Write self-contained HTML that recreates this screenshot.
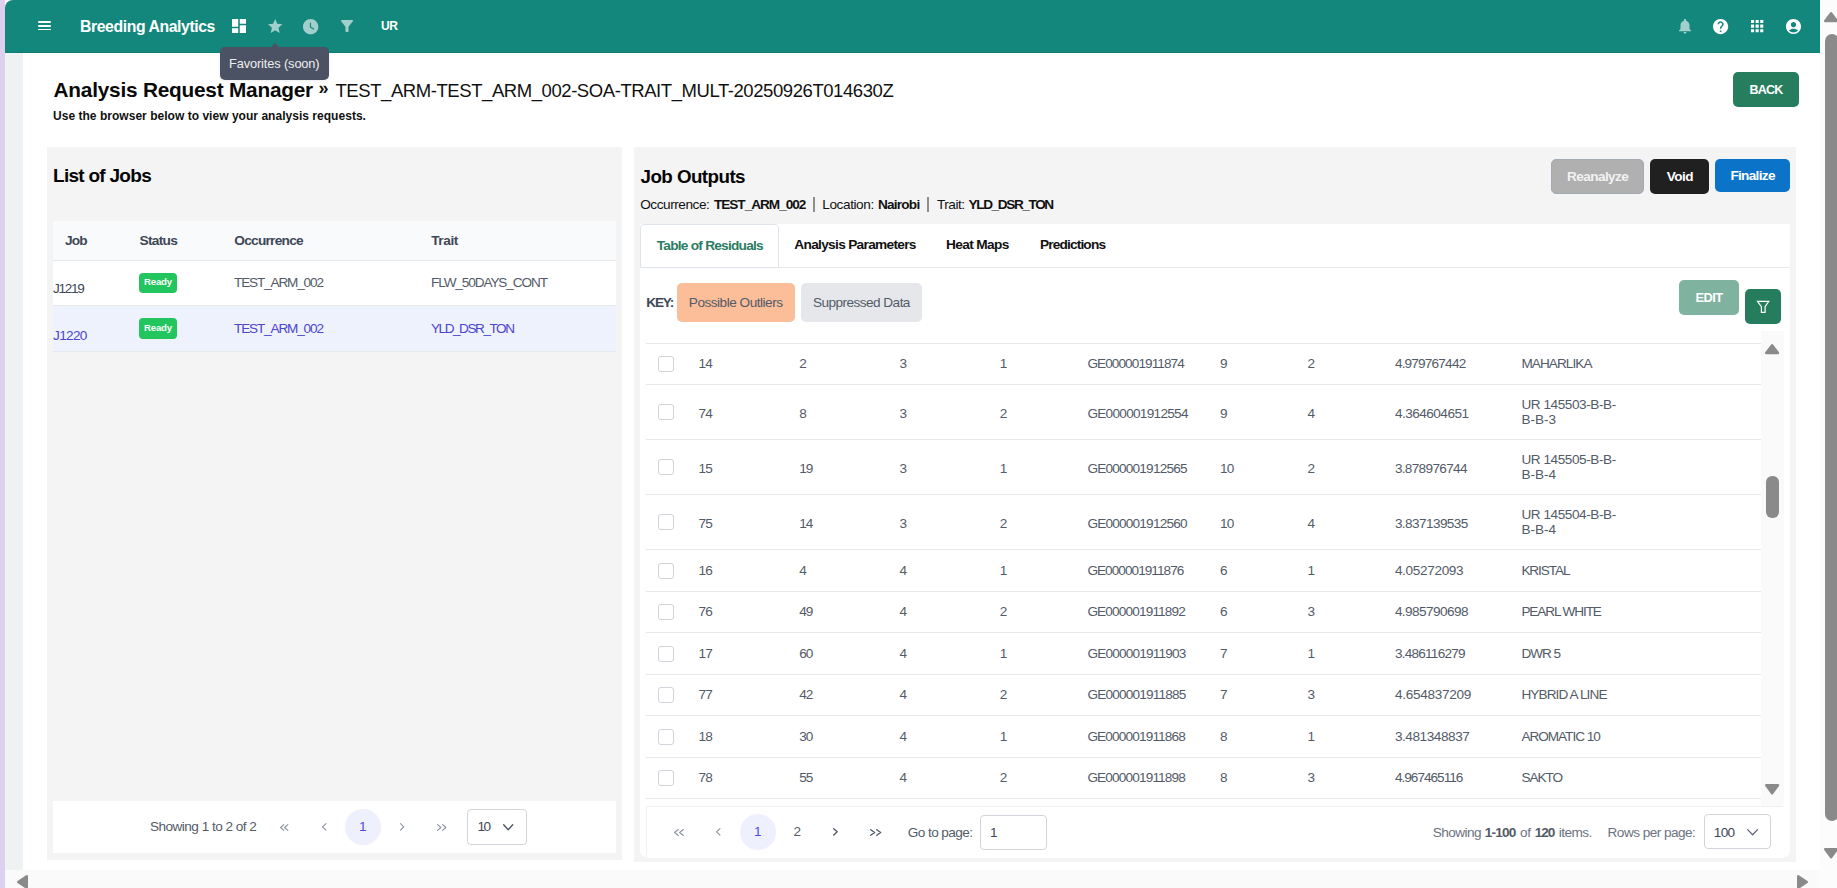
<!DOCTYPE html><html><head><meta charset="utf-8"><style>html,body{margin:0;padding:0;width:1837px;height:888px;overflow:hidden;background:#fff;}body{position:relative;font-family:"Liberation Sans", sans-serif;}.t{position:absolute;white-space:nowrap;line-height:1.117;}</style></head><body><div style="position:absolute;left:0px;top:0px;width:1837px;height:888px;background:#ffffff;"></div><div style="position:absolute;left:0px;top:0px;width:5px;height:888px;background:#ded0ef;"></div><div style="position:absolute;left:5px;top:53px;width:18px;height:817px;background:#eef2f3;"></div><div style="position:absolute;left:5px;top:0px;width:1815px;height:53px;background:#14877c;border-top-left-radius:8px;"></div><div style="position:absolute;left:5px;top:52px;width:1815px;height:1px;background:#0f7f74;"></div><div style="position:absolute;left:1820px;top:0px;width:17px;height:870px;background:#fcfcfc;"></div><div style="position:absolute;left:0px;top:870px;width:20px;height:18px;background:#ded0ef;"></div><div style="position:absolute;left:5px;top:870px;width:1815px;height:26px;background:#fafafa;border-bottom-left-radius:10px;"></div><div style="position:absolute;left:1820px;top:870px;width:17px;height:18px;background:#fcfcfc;"></div><div style="position:absolute;left:37.5px;top:21.4px;width:13.200000000000003px;height:1.6499999999999986px;background:#ffffff;border-radius:1px;"></div><div style="position:absolute;left:37.5px;top:24.95px;width:13.200000000000003px;height:1.6499999999999986px;background:#ffffff;border-radius:1px;"></div><div style="position:absolute;left:37.5px;top:28.5px;width:13.200000000000003px;height:1.6499999999999986px;background:#ffffff;border-radius:1px;"></div><div style="position:absolute;left:220px;top:47px;width:109px;height:33px;background:#4b5263;border-radius:5px;box-shadow:0 1px 3px rgba(0,0,0,0.08);"></div><div style="position:absolute;left:270px;top:43px;width:0;height:0;border-left:5px solid transparent;border-right:5px solid transparent;border-bottom:5px solid #4b5263;"></div><div style="position:absolute;left:1733px;top:72px;width:66px;height:35px;background:#277e5f;border-radius:5px;"></div><div style="position:absolute;left:47px;top:147px;width:575px;height:713px;background:#f4f4f4;"></div><div style="position:absolute;left:53px;top:221px;width:563px;height:39px;background:#f9fafb;"></div><div style="position:absolute;left:53px;top:260px;width:563px;height:1px;background:#e5e7eb;"></div><div style="position:absolute;left:53px;top:261px;width:563px;height:44px;background:#ffffff;"></div><div style="position:absolute;left:53px;top:305px;width:563px;height:1px;background:#e5e7eb;"></div><div style="position:absolute;left:53px;top:306px;width:563px;height:45px;background:#eef2fd;"></div><div style="position:absolute;left:53px;top:351px;width:563px;height:1px;background:#e5e7eb;"></div><div style="position:absolute;left:139px;top:273px;width:38px;height:20px;background:#22c55e;border-radius:4px;"></div><div style="position:absolute;left:139px;top:318px;width:38px;height:21px;background:#22c55e;border-radius:4px;"></div><div style="position:absolute;left:53px;top:801px;width:563px;height:52px;background:#ffffff;"></div><div style="position:absolute;left:344.7px;top:808.7px;width:36.60000000000002px;height:36.0px;background:#eef0fd;border-radius:50%;"></div><div style="position:absolute;left:467px;top:809px;width:60px;height:36px;background:#ffffff;border:1px solid #d1d5db;border-radius:4px;box-sizing:border-box;"></div><div style="position:absolute;left:634px;top:147px;width:1162px;height:715px;background:#f4f4f4;"></div><div style="position:absolute;left:1551px;top:159px;width:93px;height:35px;background:#b0b0b0;border:1px solid #a3aab5;border-radius:5px;box-sizing:border-box;"></div><div style="position:absolute;left:1650px;top:159px;width:59px;height:35px;background:#202020;border-radius:5px;"></div><div style="position:absolute;left:1715px;top:159px;width:75px;height:33px;background:#0b74c9;border-radius:5px;"></div><div style="position:absolute;left:813.4px;top:197.3px;width:1.6000000000000227px;height:14.299999999999983px;background:#8e8e8e;"></div><div style="position:absolute;left:927.2px;top:197.3px;width:1.599999999999909px;height:14.299999999999983px;background:#8e8e8e;"></div><div style="position:absolute;left:640px;top:224px;width:1150px;height:633px;background:#ffffff;border-radius:0 0 6px 6px;"></div><div style="position:absolute;left:640px;top:267px;width:1150px;height:1px;background:#e3e7ec;"></div><div style="position:absolute;left:640px;top:224px;width:139px;height:44px;background:#fff;border:1px solid #dfe4ea;border-radius:4px 4px 0 0;box-sizing:border-box;"></div><div style="position:absolute;left:677px;top:283px;width:118px;height:38.5px;background:#fbbe98;border-radius:5px;"></div><div style="position:absolute;left:801px;top:283px;width:120.60000000000002px;height:38.5px;background:#e5e7eb;border-radius:5px;"></div><div style="position:absolute;left:1679px;top:280px;width:60px;height:35px;background:#7fb39f;border-radius:5px;"></div><div style="position:absolute;left:1745px;top:289px;width:36px;height:35px;background:#267d5e;border-radius:5px;"></div><svg style="position:absolute;left:1756px;top:300px" width="14" height="14" viewBox="0 0 14 14"><path d="M1.5 1.4 H12.7 L9.1 6.6 V12.3 H5.4 V6.6 Z" fill="none" stroke="#fff" stroke-width="1.2" stroke-linejoin="miter"/></svg><div style="position:absolute;left:1761px;top:331px;width:23px;height:475px;background:#fafafa;"></div><div style="position:absolute;left:646px;top:343px;width:1115px;height:1px;background:#e5e7eb;"></div><div style="position:absolute;left:646px;top:384px;width:1115px;height:1px;background:#e5e7eb;"></div><div style="position:absolute;left:658px;top:356.0px;width:16px;height:16.0px;background:#ffffff;border:1px solid #cfd3da;border-radius:3px;box-sizing:border-box;"></div><div style="position:absolute;left:646px;top:439px;width:1115px;height:1px;background:#e5e7eb;"></div><div style="position:absolute;left:658px;top:404.0px;width:16px;height:16.0px;background:#ffffff;border:1px solid #cfd3da;border-radius:3px;box-sizing:border-box;"></div><div style="position:absolute;left:646px;top:494px;width:1115px;height:1px;background:#e5e7eb;"></div><div style="position:absolute;left:658px;top:459.0px;width:16px;height:16.0px;background:#ffffff;border:1px solid #cfd3da;border-radius:3px;box-sizing:border-box;"></div><div style="position:absolute;left:646px;top:549px;width:1115px;height:1px;background:#e5e7eb;"></div><div style="position:absolute;left:658px;top:514.0px;width:16px;height:16.0px;background:#ffffff;border:1px solid #cfd3da;border-radius:3px;box-sizing:border-box;"></div><div style="position:absolute;left:646px;top:591px;width:1115px;height:1px;background:#e5e7eb;"></div><div style="position:absolute;left:658px;top:562.5px;width:16px;height:16.0px;background:#ffffff;border:1px solid #cfd3da;border-radius:3px;box-sizing:border-box;"></div><div style="position:absolute;left:646px;top:632px;width:1115px;height:1px;background:#e5e7eb;"></div><div style="position:absolute;left:658px;top:604.0px;width:16px;height:16.0px;background:#ffffff;border:1px solid #cfd3da;border-radius:3px;box-sizing:border-box;"></div><div style="position:absolute;left:646px;top:674px;width:1115px;height:1px;background:#e5e7eb;"></div><div style="position:absolute;left:658px;top:645.5px;width:16px;height:16.0px;background:#ffffff;border:1px solid #cfd3da;border-radius:3px;box-sizing:border-box;"></div><div style="position:absolute;left:646px;top:715px;width:1115px;height:1px;background:#e5e7eb;"></div><div style="position:absolute;left:658px;top:687.0px;width:16px;height:16.0px;background:#ffffff;border:1px solid #cfd3da;border-radius:3px;box-sizing:border-box;"></div><div style="position:absolute;left:646px;top:757px;width:1115px;height:1px;background:#e5e7eb;"></div><div style="position:absolute;left:658px;top:728.5px;width:16px;height:16.0px;background:#ffffff;border:1px solid #cfd3da;border-radius:3px;box-sizing:border-box;"></div><div style="position:absolute;left:646px;top:798px;width:1115px;height:1px;background:#e5e7eb;"></div><div style="position:absolute;left:658px;top:770.0px;width:16px;height:16.0px;background:#ffffff;border:1px solid #cfd3da;border-radius:3px;box-sizing:border-box;"></div><svg style="position:absolute;left:1765.4px;top:344px;overflow:visible" width="14.2" height="10.2"><polygon points="1.2,9.0 7.1,1.2 13.0,9.0" fill="#8a8a8a" stroke="#8a8a8a" stroke-width="2.4" stroke-linejoin="round"/></svg><div style="position:absolute;left:1766px;top:476px;width:13px;height:42px;background:#8a8a8a;border-radius:6px;"></div><svg style="position:absolute;left:1765.4px;top:783.5px;overflow:visible" width="14.2" height="10.5"><polygon points="1.2,1.2 7.1,9.3 13.0,1.2" fill="#8a8a8a" stroke="#8a8a8a" stroke-width="2.4" stroke-linejoin="round"/></svg><div style="position:absolute;left:646px;top:806px;width:1137px;height:52px;background:#ffffff;border:1px solid #eef0f3;border-right:none;border-bottom:none;box-sizing:border-box;"></div><div style="position:absolute;left:740px;top:813.6px;width:36px;height:36.0px;background:#eef0fd;border-radius:50%;"></div><div style="position:absolute;left:980px;top:815px;width:67px;height:35px;background:#ffffff;border:1px solid #d1d5db;border-radius:4px;box-sizing:border-box;"></div><div style="position:absolute;left:1704px;top:814px;width:67px;height:35px;background:#ffffff;border:1px solid #d1d5db;border-radius:4px;box-sizing:border-box;"></div><svg style="position:absolute;left:232px;top:19px;overflow:visible" width="14" height="14" viewBox="3 3 18 18" preserveAspectRatio="none"><path d="M3 13h8V3H3v10zm0 8h8v-6H3v6zm10 0h8V11h-8v10zm0-18v6h8V3h-8z" fill="#fff" /></svg><svg style="position:absolute;left:267.6px;top:19px;overflow:visible" width="14.4" height="13.9" viewBox="2 2 20 19" preserveAspectRatio="none"><path d="M12 17.27L18.18 21l-1.64-7.03L22 9.24l-7.19-.61L12 2 9.19 8.63 2 9.24l5.46 4.73L5.82 21z" fill="#a1cfcb" /></svg><svg style="position:absolute;left:303.2px;top:18.6px;overflow:visible" width="15.3" height="15.3" viewBox="2 2 20 20" preserveAspectRatio="none"><path d="M12 2C6.5 2 2 6.5 2 12s4.5 10 10 10 10-4.5 10-10S17.5 2 12 2zm4.2 14.2L11 13V7h1.5v5.2l4.5 2.7-.8 1.3z" fill="#a1cfcb" /></svg><svg style="position:absolute;left:341px;top:20px;overflow:visible" width="12" height="12" viewBox="4.1 4 15.8 16" preserveAspectRatio="none"><path d="M4.25 5.61C6.27 8.2 10 13 10 13v6c0 .55.45 1 1 1h2c.55 0 1-.45 1-1v-6s3.72-4.8 5.74-7.39c.51-.66.04-1.61-.79-1.61H5.04c-.83 0-1.3.95-.79 1.61z" fill="#a1cfcb" /></svg><svg style="position:absolute;left:1679px;top:19.3px;overflow:visible" width="12" height="14.6" viewBox="4 2.5 16 19.5" preserveAspectRatio="none"><path d="M12 22c1.1 0 2-.9 2-2h-4c0 1.1.89 2 2 2zm6-6v-5c0-3.07-1.64-5.64-4.5-6.32V4c0-.83-.67-1.5-1.5-1.5s-1.5.67-1.5 1.5v.68C7.63 5.36 6 7.92 6 11v5l-2 2v1h16v-1l-2-2z" fill="#a1cfcb" /></svg><svg style="position:absolute;left:1713.4px;top:18.5px;overflow:visible" width="15.2" height="15.2" viewBox="2 2 20 20" preserveAspectRatio="none"><path d="M12 2C6.48 2 2 6.48 2 12s4.48 10 10 10 10-4.48 10-10S17.520 2 12 2zm1 17h-2v-2h2v2zm2.07-7.75l-.9.92C13.45 12.9 13 13.5 13 15h-2v-.5c0-1.1.45-2.1 1.17-2.83l1.24-1.26c.37-.36.59-.86.59-1.410 0-1.1-.9-2-2-2s-2 .9-2 2H8c0-2.21 1.79-4 4-4s4 1.79 4 4c0 .88-.36 1.68-.93 2.25z" fill="#fff" /></svg><svg style="position:absolute;left:1750.8px;top:20.1px;overflow:visible" width="12.3" height="12.3" viewBox="4 4 16 16" preserveAspectRatio="none"><path d="M4 8h4V4H4v4zm6 12h4v-4h-4v4zm-6 0h4v-4H4v4zm0-6h4v-4H4v4zm6 0h4v-4h-4v4zm6-10v4h4V4h-4zm-6 4h4V4h-4v4zm6 6h4v-4h-4v4zm0 6h4v-4h-4v4z" fill="#fff" /></svg><svg style="position:absolute;left:1785.5px;top:18.5px;overflow:visible" width="15" height="15" viewBox="2 2 20 20" preserveAspectRatio="none"><path d="M12 2C6.48 2 2 6.48 2 12s4.48 10 10 10 10-4.48 10-10S17.52 2 12 2zm0 4c1.93 0 3.5 1.57 3.5 3.5S13.930 13 12 13s-3.5-1.57-3.5-3.5S10.07 6 12 6zm0 14c-2.03 0-4.43-.82-6.14-2.88C7.55 15.8 9.68 15 12 15s4.45.8 6.14 2.12C16.43 19.18 14.03 20 12 20z" fill="#fff" /></svg><svg style="position:absolute;left:279.6px;top:823.5px;overflow:visible" width="4.399999999999977" height="7"><path d="M3.8499999999999774 0.55 L0.55 3.5 L3.8499999999999774 6.45" fill="none" stroke="#8b93a0" stroke-width="1.1" stroke-linecap="round" stroke-linejoin="round"/></svg><svg style="position:absolute;left:284.0px;top:823.5px;overflow:visible" width="4.399999999999977" height="7"><path d="M3.8499999999999774 0.55 L0.55 3.5 L3.8499999999999774 6.45" fill="none" stroke="#8b93a0" stroke-width="1.1" stroke-linecap="round" stroke-linejoin="round"/></svg><svg style="position:absolute;left:321.7px;top:823.15px;overflow:visible" width="4.600000000000023" height="7.7"><path d="M4.050000000000023 0.55 L0.55 3.85 L4.050000000000023 7.15" fill="none" stroke="#8b93a0" stroke-width="1.1" stroke-linecap="round" stroke-linejoin="round"/></svg><svg style="position:absolute;left:399.9px;top:822.9499999999999px;overflow:visible" width="4.300000000000011" height="7.7"><path d="M0.55 0.55 L3.7500000000000115 3.85 L0.55 7.15" fill="none" stroke="#8b93a0" stroke-width="1.1" stroke-linecap="round" stroke-linejoin="round"/></svg><svg style="position:absolute;left:437.4px;top:823.5px;overflow:visible" width="4.399999999999977" height="7"><path d="M0.55 0.55 L3.8499999999999774 3.5 L0.55 6.45" fill="none" stroke="#8b93a0" stroke-width="1.1" stroke-linecap="round" stroke-linejoin="round"/></svg><svg style="position:absolute;left:441.79999999999995px;top:823.5px;overflow:visible" width="4.400000000000034" height="7"><path d="M0.55 0.55 L3.8500000000000343 3.5 L0.55 6.45" fill="none" stroke="#8b93a0" stroke-width="1.1" stroke-linecap="round" stroke-linejoin="round"/></svg><svg style="position:absolute;left:502.8px;top:823.8px;overflow:visible" width="10.400000000000034" height="6.4"><path d="M0.675 0.675 L5.200000000000017 5.7250000000000005 L9.725000000000033 0.675" fill="none" stroke="#4b5563" stroke-width="1.35" stroke-linecap="round" stroke-linejoin="round"/></svg><svg style="position:absolute;left:674.3px;top:828.5px;overflow:visible" width="4.850000000000023" height="7"><path d="M4.300000000000023 0.55 L0.55 3.5 L4.300000000000023 6.45" fill="none" stroke="#8b93a0" stroke-width="1.1" stroke-linecap="round" stroke-linejoin="round"/></svg><svg style="position:absolute;left:679.15px;top:828.5px;overflow:visible" width="4.850000000000023" height="7"><path d="M4.300000000000023 0.55 L0.55 3.5 L4.300000000000023 6.45" fill="none" stroke="#8b93a0" stroke-width="1.1" stroke-linecap="round" stroke-linejoin="round"/></svg><svg style="position:absolute;left:715.8px;top:828.15px;overflow:visible" width="4.5" height="7.7"><path d="M3.95 0.55 L0.55 3.85 L3.95 7.15" fill="none" stroke="#8b93a0" stroke-width="1.1" stroke-linecap="round" stroke-linejoin="round"/></svg><svg style="position:absolute;left:833.3px;top:828.15px;overflow:visible" width="4.900000000000091" height="7.7"><path d="M0.7 0.7 L4.200000000000091 3.85 L0.7 7.0" fill="none" stroke="#535b68" stroke-width="1.4" stroke-linecap="round" stroke-linejoin="round"/></svg><svg style="position:absolute;left:870.2px;top:828.5px;overflow:visible" width="5.399999999999977" height="7"><path d="M0.7 0.7 L4.699999999999977 3.5 L0.7 6.3" fill="none" stroke="#535b68" stroke-width="1.4" stroke-linecap="round" stroke-linejoin="round"/></svg><svg style="position:absolute;left:875.6px;top:828.5px;overflow:visible" width="5.399999999999977" height="7"><path d="M0.7 0.7 L4.699999999999977 3.5 L0.7 6.3" fill="none" stroke="#535b68" stroke-width="1.4" stroke-linecap="round" stroke-linejoin="round"/></svg><svg style="position:absolute;left:1746.6px;top:829.0px;overflow:visible" width="11.200000000000045" height="6.4"><path d="M0.625 0.625 L5.600000000000023 5.775 L10.575000000000045 0.625" fill="none" stroke="#5b6472" stroke-width="1.25" stroke-linecap="round" stroke-linejoin="round"/></svg><svg style="position:absolute;left:1824.3px;top:12px;overflow:visible" width="14.2" height="10.2"><polygon points="1.2,9.0 7.1,1.2 13.0,9.0" fill="#8a8a8a" stroke="#8a8a8a" stroke-width="2.4" stroke-linejoin="round"/></svg><div style="position:absolute;left:1825px;top:34px;width:14px;height:787px;background:#8a8a8a;border-radius:7px;"></div><svg style="position:absolute;left:1824.3px;top:848px;overflow:visible" width="14.2" height="10.5"><polygon points="1.2,1.2 7.1,9.3 13.0,1.2" fill="#8a8a8a" stroke="#8a8a8a" stroke-width="2.4" stroke-linejoin="round"/></svg><svg style="position:absolute;left:17px;top:875px;overflow:visible" width="11" height="14"><polygon points="9.8,1.2 1.2,7.0 9.8,12.8" fill="#8a8a8a" stroke="#8a8a8a" stroke-width="2.4" stroke-linejoin="round"/></svg><svg style="position:absolute;left:1797px;top:875px;overflow:visible" width="11" height="14"><polygon points="1.2,1.2 9.8,7.0 1.2,12.8" fill="#8a8a8a" stroke="#8a8a8a" stroke-width="2.4" stroke-linejoin="round"/></svg><div class="t" style="left:80.00px;top:18.00px;font-size:15.8px;font-weight:700;color:#ffffff;letter-spacing:-0.418px;">Breeding Analytics</div><div class="t" style="left:381.00px;top:20.44px;font-size:12px;font-weight:700;color:#ffffff;letter-spacing:-0.422px;">UR</div><div class="t" style="left:229.00px;top:56.72px;font-size:12.8px;font-weight:400;color:#eeeeee;letter-spacing:-0.122px;">Favorites (soon)</div><div class="t" style="left:53.50px;top:77.78px;font-size:20.8px;font-weight:700;color:#0a0a0a;letter-spacing:-0.216px;">Analysis Request Manager</div><div class="t" style="left:318.60px;top:78.21px;font-size:18px;font-weight:700;color:#111111;letter-spacing:-0.416px;">»</div><div class="t" style="left:335.50px;top:80.56px;font-size:18.5px;font-weight:400;color:#111111;letter-spacing:-0.430px;">TEST_ARM-TEST_ARM_002-SOA-TRAIT_MULT-20250926T014630Z</div><div class="t" style="left:53.00px;top:110.44px;font-size:12px;font-weight:700;color:#111111;letter-spacing:0.029px;">Use the browser below to view your analysis requests.</div><div class="t" style="left:1749.50px;top:84.19px;font-size:12.5px;font-weight:700;color:#ffffff;letter-spacing:-0.752px;">BACK</div><div class="t" style="left:53.00px;top:164.81px;font-size:19px;font-weight:700;color:#050505;letter-spacing:-0.719px;">List of Jobs</div><div class="t" style="left:65.00px;top:232.70px;font-size:13.7px;font-weight:700;color:#3e4757;letter-spacing:-0.881px;">Job</div><div class="t" style="left:139.60px;top:232.70px;font-size:13.7px;font-weight:700;color:#3e4757;letter-spacing:-0.707px;">Status</div><div class="t" style="left:234.30px;top:232.70px;font-size:13.7px;font-weight:700;color:#3e4757;letter-spacing:-0.749px;">Occurrence</div><div class="t" style="left:431.20px;top:232.70px;font-size:13.7px;font-weight:700;color:#3e4757;letter-spacing:-0.421px;">Trait</div><div class="t" style="left:53.00px;top:281.49px;font-size:13.6px;font-weight:400;color:#3e4757;letter-spacing:-1.329px;">J1219</div><div class="t" style="left:144.00px;top:277.31px;font-size:9.6px;font-weight:700;color:#ffffff;letter-spacing:-0.159px;">Ready</div><div class="t" style="left:234.00px;top:274.69px;font-size:13.6px;font-weight:400;color:#535b68;letter-spacing:-1.162px;">TEST_ARM_002</div><div class="t" style="left:431.00px;top:274.69px;font-size:13.6px;font-weight:400;color:#535b68;letter-spacing:-1.104px;">FLW_50DAYS_CONT</div><div class="t" style="left:53.00px;top:327.99px;font-size:13.6px;font-weight:400;color:#4d45cc;letter-spacing:-0.669px;">J1220</div><div class="t" style="left:144.00px;top:322.81px;font-size:9.6px;font-weight:700;color:#ffffff;letter-spacing:-0.159px;">Ready</div><div class="t" style="left:234.00px;top:321.39px;font-size:13.6px;font-weight:400;color:#4d45cc;letter-spacing:-1.162px;">TEST_ARM_002</div><div class="t" style="left:431.00px;top:321.39px;font-size:13.6px;font-weight:400;color:#4d45cc;letter-spacing:-1.474px;">YLD_DSR_TON</div><div class="t" style="left:150.00px;top:819.29px;font-size:13.6px;font-weight:400;color:#535b68;letter-spacing:-0.536px;">Showing 1 to 2 of 2</div><div class="t" style="left:359.00px;top:819.19px;font-size:13.6px;font-weight:400;color:#4f46e5;letter-spacing:0.000px;">1</div><div class="t" style="left:477.60px;top:819.19px;font-size:13.6px;font-weight:400;color:#3e4757;letter-spacing:-1.562px;">10</div><div class="t" style="left:640.50px;top:165.69px;font-size:18.8px;font-weight:700;color:#050505;letter-spacing:-0.554px;">Job Outputs</div><div class="t" style="left:1567.00px;top:168.79px;font-size:13.6px;font-weight:700;color:#f2f2f2;letter-spacing:-0.578px;">Reanalyze</div><div class="t" style="left:1666.80px;top:168.79px;font-size:13.6px;font-weight:700;color:#ffffff;letter-spacing:-0.588px;">Void</div><div class="t" style="left:1730.40px;top:167.89px;font-size:13.6px;font-weight:700;color:#ffffff;letter-spacing:-0.682px;">Finalize</div><div class="t" style="left:640.20px;top:197.19px;font-size:13.6px;font-weight:400;color:#111111;letter-spacing:-0.441px;">Occurrence:</div><div class="t" style="left:713.90px;top:197.19px;font-size:13.6px;font-weight:700;color:#111111;letter-spacing:-1.000px;">TEST_ARM_002</div><div class="t" style="left:822.30px;top:197.19px;font-size:13.6px;font-weight:400;color:#111111;letter-spacing:-0.408px;">Location:</div><div class="t" style="left:878.00px;top:197.19px;font-size:13.6px;font-weight:700;color:#111111;letter-spacing:-0.775px;">Nairobi</div><div class="t" style="left:937.00px;top:197.19px;font-size:13.6px;font-weight:400;color:#111111;letter-spacing:-0.478px;">Trait:</div><div class="t" style="left:968.60px;top:197.19px;font-size:13.6px;font-weight:700;color:#111111;letter-spacing:-1.388px;">YLD_DSR_TON</div><div class="t" style="left:656.80px;top:237.70px;font-size:13.7px;font-weight:700;color:#2a7d62;letter-spacing:-0.768px;">Table of Residuals</div><div class="t" style="left:794.30px;top:236.70px;font-size:13.7px;font-weight:700;color:#111111;letter-spacing:-0.694px;">Analysis Parameters</div><div class="t" style="left:946.10px;top:236.70px;font-size:13.7px;font-weight:700;color:#111111;letter-spacing:-0.641px;">Heat Maps</div><div class="t" style="left:1039.90px;top:236.70px;font-size:13.7px;font-weight:700;color:#111111;letter-spacing:-0.841px;">Predictions</div><div class="t" style="left:646.30px;top:294.99px;font-size:13.6px;font-weight:700;color:#3e4757;letter-spacing:-1.192px;">KEY:</div><div class="t" style="left:688.80px;top:295.49px;font-size:13.6px;font-weight:400;color:#535b68;letter-spacing:-0.488px;">Possible Outliers</div><div class="t" style="left:812.90px;top:295.49px;font-size:13.6px;font-weight:400;color:#535b68;letter-spacing:-0.536px;">Suppressed Data</div><div class="t" style="left:1695.60px;top:290.72px;font-size:12.8px;font-weight:700;color:#ffffff;letter-spacing:-0.539px;">EDIT</div><div class="t" style="left:698.60px;top:356.49px;font-size:13.6px;font-weight:400;color:#535b68;letter-spacing:-0.900px;">14</div><div class="t" style="left:799.20px;top:356.49px;font-size:13.6px;font-weight:400;color:#535b68;letter-spacing:0.000px;">2</div><div class="t" style="left:899.40px;top:356.49px;font-size:13.6px;font-weight:400;color:#535b68;letter-spacing:0.000px;">3</div><div class="t" style="left:999.70px;top:356.49px;font-size:13.6px;font-weight:400;color:#535b68;letter-spacing:0.000px;">1</div><div class="t" style="left:1087.40px;top:356.49px;font-size:13.6px;font-weight:400;color:#535b68;letter-spacing:-0.919px;">GE000001911874</div><div class="t" style="left:1220.00px;top:356.49px;font-size:13.6px;font-weight:400;color:#535b68;letter-spacing:0.000px;">9</div><div class="t" style="left:1307.50px;top:356.49px;font-size:13.6px;font-weight:400;color:#535b68;letter-spacing:0.000px;">2</div><div class="t" style="left:1394.90px;top:356.49px;font-size:13.6px;font-weight:400;color:#535b68;letter-spacing:-0.808px;">4.979767442</div><div class="t" style="left:1521.40px;top:356.49px;font-size:13.6px;font-weight:400;color:#535b68;letter-spacing:-0.929px;">MAHARLIKA</div><div class="t" style="left:698.60px;top:405.59px;font-size:13.6px;font-weight:400;color:#535b68;letter-spacing:-0.900px;">74</div><div class="t" style="left:799.20px;top:405.59px;font-size:13.6px;font-weight:400;color:#535b68;letter-spacing:0.000px;">8</div><div class="t" style="left:899.40px;top:405.59px;font-size:13.6px;font-weight:400;color:#535b68;letter-spacing:0.000px;">3</div><div class="t" style="left:999.70px;top:405.59px;font-size:13.6px;font-weight:400;color:#535b68;letter-spacing:0.000px;">2</div><div class="t" style="left:1087.40px;top:405.59px;font-size:13.6px;font-weight:400;color:#535b68;letter-spacing:-0.713px;">GE000001912554</div><div class="t" style="left:1220.00px;top:405.59px;font-size:13.6px;font-weight:400;color:#535b68;letter-spacing:0.000px;">9</div><div class="t" style="left:1307.50px;top:405.59px;font-size:13.6px;font-weight:400;color:#535b68;letter-spacing:0.000px;">4</div><div class="t" style="left:1394.90px;top:405.59px;font-size:13.6px;font-weight:400;color:#535b68;letter-spacing:-0.526px;">4.364604651</div><div class="t" style="left:1521.40px;top:397.49px;font-size:13.6px;font-weight:400;color:#535b68;letter-spacing:-0.436px;">UR 145503-B-B-</div><div class="t" style="left:1521.40px;top:412.09px;font-size:13.6px;font-weight:400;color:#535b68;letter-spacing:0.010px;">B-B-3</div><div class="t" style="left:698.60px;top:460.59px;font-size:13.6px;font-weight:400;color:#535b68;letter-spacing:-0.900px;">15</div><div class="t" style="left:799.20px;top:460.59px;font-size:13.6px;font-weight:400;color:#535b68;letter-spacing:-0.900px;">19</div><div class="t" style="left:899.40px;top:460.59px;font-size:13.6px;font-weight:400;color:#535b68;letter-spacing:0.000px;">3</div><div class="t" style="left:999.70px;top:460.59px;font-size:13.6px;font-weight:400;color:#535b68;letter-spacing:0.000px;">1</div><div class="t" style="left:1087.40px;top:460.59px;font-size:13.6px;font-weight:400;color:#535b68;letter-spacing:-0.784px;">GE000001912565</div><div class="t" style="left:1220.00px;top:460.59px;font-size:13.6px;font-weight:400;color:#535b68;letter-spacing:-0.900px;">10</div><div class="t" style="left:1307.50px;top:460.59px;font-size:13.6px;font-weight:400;color:#535b68;letter-spacing:0.000px;">2</div><div class="t" style="left:1394.90px;top:460.59px;font-size:13.6px;font-weight:400;color:#535b68;letter-spacing:-0.681px;">3.878976744</div><div class="t" style="left:1521.40px;top:452.49px;font-size:13.6px;font-weight:400;color:#535b68;letter-spacing:-0.436px;">UR 145505-B-B-</div><div class="t" style="left:1521.40px;top:467.09px;font-size:13.6px;font-weight:400;color:#535b68;letter-spacing:0.010px;">B-B-4</div><div class="t" style="left:698.60px;top:515.59px;font-size:13.6px;font-weight:400;color:#535b68;letter-spacing:-0.900px;">75</div><div class="t" style="left:799.20px;top:515.59px;font-size:13.6px;font-weight:400;color:#535b68;letter-spacing:-0.900px;">14</div><div class="t" style="left:899.40px;top:515.59px;font-size:13.6px;font-weight:400;color:#535b68;letter-spacing:0.000px;">3</div><div class="t" style="left:999.70px;top:515.59px;font-size:13.6px;font-weight:400;color:#535b68;letter-spacing:0.000px;">2</div><div class="t" style="left:1087.40px;top:515.59px;font-size:13.6px;font-weight:400;color:#535b68;letter-spacing:-0.784px;">GE000001912560</div><div class="t" style="left:1220.00px;top:515.59px;font-size:13.6px;font-weight:400;color:#535b68;letter-spacing:-0.900px;">10</div><div class="t" style="left:1307.50px;top:515.59px;font-size:13.6px;font-weight:400;color:#535b68;letter-spacing:0.000px;">4</div><div class="t" style="left:1394.90px;top:515.59px;font-size:13.6px;font-weight:400;color:#535b68;letter-spacing:-0.590px;">3.837139535</div><div class="t" style="left:1521.40px;top:507.49px;font-size:13.6px;font-weight:400;color:#535b68;letter-spacing:-0.436px;">UR 145504-B-B-</div><div class="t" style="left:1521.40px;top:522.09px;font-size:13.6px;font-weight:400;color:#535b68;letter-spacing:0.010px;">B-B-4</div><div class="t" style="left:698.60px;top:562.99px;font-size:13.6px;font-weight:400;color:#535b68;letter-spacing:-0.900px;">16</div><div class="t" style="left:799.20px;top:562.99px;font-size:13.6px;font-weight:400;color:#535b68;letter-spacing:0.000px;">4</div><div class="t" style="left:899.40px;top:562.99px;font-size:13.6px;font-weight:400;color:#535b68;letter-spacing:0.000px;">4</div><div class="t" style="left:999.70px;top:562.99px;font-size:13.6px;font-weight:400;color:#535b68;letter-spacing:0.000px;">1</div><div class="t" style="left:1087.40px;top:562.99px;font-size:13.6px;font-weight:400;color:#535b68;letter-spacing:-0.954px;">GE000001911876</div><div class="t" style="left:1220.00px;top:562.99px;font-size:13.6px;font-weight:400;color:#535b68;letter-spacing:0.000px;">6</div><div class="t" style="left:1307.50px;top:562.99px;font-size:13.6px;font-weight:400;color:#535b68;letter-spacing:0.000px;">1</div><div class="t" style="left:1394.90px;top:562.99px;font-size:13.6px;font-weight:400;color:#535b68;letter-spacing:-0.343px;">4.05272093</div><div class="t" style="left:1521.40px;top:562.99px;font-size:13.6px;font-weight:400;color:#535b68;letter-spacing:-1.094px;">KRISTAL</div><div class="t" style="left:698.60px;top:604.49px;font-size:13.6px;font-weight:400;color:#535b68;letter-spacing:-0.900px;">76</div><div class="t" style="left:799.20px;top:604.49px;font-size:13.6px;font-weight:400;color:#535b68;letter-spacing:-0.900px;">49</div><div class="t" style="left:899.40px;top:604.49px;font-size:13.6px;font-weight:400;color:#535b68;letter-spacing:0.000px;">4</div><div class="t" style="left:999.70px;top:604.49px;font-size:13.6px;font-weight:400;color:#535b68;letter-spacing:0.000px;">2</div><div class="t" style="left:1087.40px;top:604.49px;font-size:13.6px;font-weight:400;color:#535b68;letter-spacing:-0.840px;">GE000001911892</div><div class="t" style="left:1220.00px;top:604.49px;font-size:13.6px;font-weight:400;color:#535b68;letter-spacing:0.000px;">6</div><div class="t" style="left:1307.50px;top:604.49px;font-size:13.6px;font-weight:400;color:#535b68;letter-spacing:0.000px;">3</div><div class="t" style="left:1394.90px;top:604.49px;font-size:13.6px;font-weight:400;color:#535b68;letter-spacing:-0.581px;">4.985790698</div><div class="t" style="left:1521.40px;top:604.49px;font-size:13.6px;font-weight:400;color:#535b68;letter-spacing:-1.114px;">PEARL WHITE</div><div class="t" style="left:698.60px;top:645.99px;font-size:13.6px;font-weight:400;color:#535b68;letter-spacing:-0.900px;">17</div><div class="t" style="left:799.20px;top:645.99px;font-size:13.6px;font-weight:400;color:#535b68;letter-spacing:-0.900px;">60</div><div class="t" style="left:899.40px;top:645.99px;font-size:13.6px;font-weight:400;color:#535b68;letter-spacing:0.000px;">4</div><div class="t" style="left:999.70px;top:645.99px;font-size:13.6px;font-weight:400;color:#535b68;letter-spacing:0.000px;">1</div><div class="t" style="left:1087.40px;top:645.99px;font-size:13.6px;font-weight:400;color:#535b68;letter-spacing:-0.797px;">GE000001911903</div><div class="t" style="left:1220.00px;top:645.99px;font-size:13.6px;font-weight:400;color:#535b68;letter-spacing:0.000px;">7</div><div class="t" style="left:1307.50px;top:645.99px;font-size:13.6px;font-weight:400;color:#535b68;letter-spacing:0.000px;">1</div><div class="t" style="left:1394.90px;top:645.99px;font-size:13.6px;font-weight:400;color:#535b68;letter-spacing:-0.770px;">3.486116279</div><div class="t" style="left:1521.40px;top:645.99px;font-size:13.6px;font-weight:400;color:#535b68;letter-spacing:-1.023px;">DWR 5</div><div class="t" style="left:698.60px;top:687.49px;font-size:13.6px;font-weight:400;color:#535b68;letter-spacing:-0.900px;">77</div><div class="t" style="left:799.20px;top:687.49px;font-size:13.6px;font-weight:400;color:#535b68;letter-spacing:-0.900px;">42</div><div class="t" style="left:899.40px;top:687.49px;font-size:13.6px;font-weight:400;color:#535b68;letter-spacing:0.000px;">4</div><div class="t" style="left:999.70px;top:687.49px;font-size:13.6px;font-weight:400;color:#535b68;letter-spacing:0.000px;">2</div><div class="t" style="left:1087.40px;top:687.49px;font-size:13.6px;font-weight:400;color:#535b68;letter-spacing:-0.797px;">GE000001911885</div><div class="t" style="left:1220.00px;top:687.49px;font-size:13.6px;font-weight:400;color:#535b68;letter-spacing:0.000px;">7</div><div class="t" style="left:1307.50px;top:687.49px;font-size:13.6px;font-weight:400;color:#535b68;letter-spacing:0.000px;">3</div><div class="t" style="left:1394.90px;top:687.49px;font-size:13.6px;font-weight:400;color:#535b68;letter-spacing:-0.299px;">4.654837209</div><div class="t" style="left:1521.40px;top:687.49px;font-size:13.6px;font-weight:400;color:#535b68;letter-spacing:-0.885px;">HYBRID A LINE</div><div class="t" style="left:698.60px;top:728.99px;font-size:13.6px;font-weight:400;color:#535b68;letter-spacing:-0.900px;">18</div><div class="t" style="left:799.20px;top:728.99px;font-size:13.6px;font-weight:400;color:#535b68;letter-spacing:-0.900px;">30</div><div class="t" style="left:899.40px;top:728.99px;font-size:13.6px;font-weight:400;color:#535b68;letter-spacing:0.000px;">4</div><div class="t" style="left:999.70px;top:728.99px;font-size:13.6px;font-weight:400;color:#535b68;letter-spacing:0.000px;">1</div><div class="t" style="left:1087.40px;top:728.99px;font-size:13.6px;font-weight:400;color:#535b68;letter-spacing:-0.840px;">GE000001911868</div><div class="t" style="left:1220.00px;top:728.99px;font-size:13.6px;font-weight:400;color:#535b68;letter-spacing:0.000px;">8</div><div class="t" style="left:1307.50px;top:728.99px;font-size:13.6px;font-weight:400;color:#535b68;letter-spacing:0.000px;">1</div><div class="t" style="left:1394.90px;top:728.99px;font-size:13.6px;font-weight:400;color:#535b68;letter-spacing:-0.436px;">3.481348837</div><div class="t" style="left:1521.40px;top:728.99px;font-size:13.6px;font-weight:400;color:#535b68;letter-spacing:-1.022px;">AROMATIC 10</div><div class="t" style="left:698.60px;top:770.49px;font-size:13.6px;font-weight:400;color:#535b68;letter-spacing:-0.900px;">78</div><div class="t" style="left:799.20px;top:770.49px;font-size:13.6px;font-weight:400;color:#535b68;letter-spacing:-0.900px;">55</div><div class="t" style="left:899.40px;top:770.49px;font-size:13.6px;font-weight:400;color:#535b68;letter-spacing:0.000px;">4</div><div class="t" style="left:999.70px;top:770.49px;font-size:13.6px;font-weight:400;color:#535b68;letter-spacing:0.000px;">2</div><div class="t" style="left:1087.40px;top:770.49px;font-size:13.6px;font-weight:400;color:#535b68;letter-spacing:-0.840px;">GE000001911898</div><div class="t" style="left:1220.00px;top:770.49px;font-size:13.6px;font-weight:400;color:#535b68;letter-spacing:0.000px;">8</div><div class="t" style="left:1307.50px;top:770.49px;font-size:13.6px;font-weight:400;color:#535b68;letter-spacing:0.000px;">3</div><div class="t" style="left:1394.90px;top:770.49px;font-size:13.6px;font-weight:400;color:#535b68;letter-spacing:-0.989px;">4.967465116</div><div class="t" style="left:1521.40px;top:770.49px;font-size:13.6px;font-weight:400;color:#535b68;letter-spacing:-1.049px;">SAKTO</div><div class="t" style="left:754.00px;top:824.29px;font-size:13.6px;font-weight:400;color:#4f46e5;letter-spacing:0.000px;">1</div><div class="t" style="left:793.50px;top:824.29px;font-size:13.6px;font-weight:400;color:#535b68;letter-spacing:0.000px;">2</div><div class="t" style="left:907.80px;top:825.49px;font-size:13.6px;font-weight:400;color:#535b68;letter-spacing:-0.577px;">Go to page:</div><div class="t" style="left:990.00px;top:825.49px;font-size:13.6px;font-weight:400;color:#3e4757;letter-spacing:0.000px;">1</div><div class="t" style="left:1432.80px;top:824.89px;font-size:13.6px;font-weight:400;color:#6b7280;letter-spacing:-0.579px;">Showing</div><div class="t" style="left:1713.80px;top:824.59px;font-size:13.6px;font-weight:400;color:#3e4757;letter-spacing:-0.696px;">100</div><div class="t" style="left:1484.80px;top:824.89px;font-size:13.6px;font-weight:700;color:#535b68;letter-spacing:-0.796px;">1-100</div><div class="t" style="left:1520.00px;top:824.89px;font-size:13.6px;font-weight:400;color:#6b7280;letter-spacing:-0.222px;">of</div><div class="t" style="left:1534.80px;top:824.89px;font-size:13.6px;font-weight:700;color:#535b68;letter-spacing:-1.029px;">120</div><div class="t" style="left:1558.80px;top:824.89px;font-size:13.6px;font-weight:400;color:#6b7280;letter-spacing:-0.561px;">items.</div><div class="t" style="left:1607.60px;top:824.89px;font-size:13.6px;font-weight:400;color:#6b7280;letter-spacing:-0.544px;">Rows per page:</div></body></html>
